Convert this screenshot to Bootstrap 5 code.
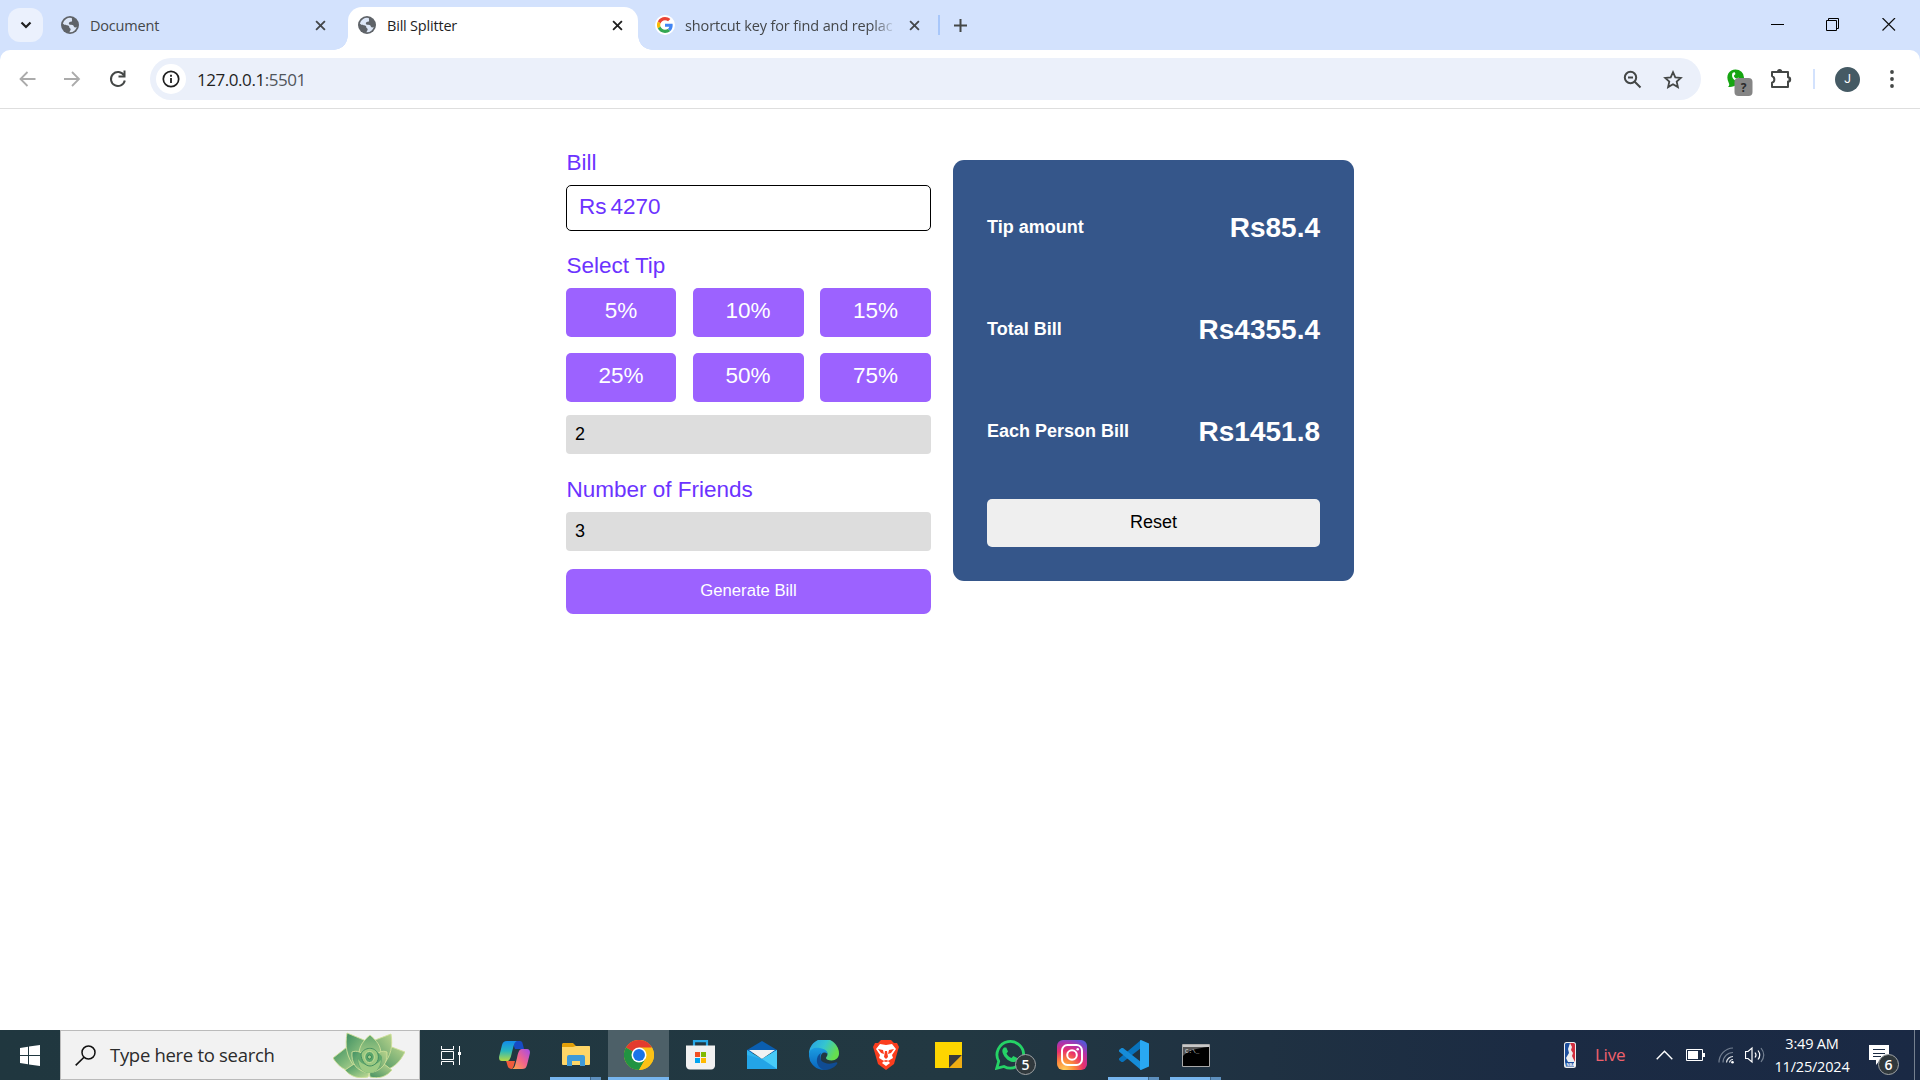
<!DOCTYPE html>
<html lang="en">
<head>
<meta charset="utf-8">
<meta name="viewport" content="width=device-width, initial-scale=1">
<title>Bill Splitter</title>
<link href="https://cdn.jsdelivr.net/npm/bootstrap@5.3.0/dist/css/bootstrap.min.css" rel="stylesheet">
<style>
  body { width: 1920px; height: 1080px; overflow: hidden; font-family: "Liberation Sans", sans-serif; background: #fff; }
  svg { display: block; flex: none; }
  .ui-font { font-family: "Open Sans", "Noto Sans", sans-serif; }

  /* Browser chrome */
  .tabstrip { height: 50px; background: #d3e2fd; padding-left: 8px; }
  .tab-search { width: 35px; height: 34px; margin-top: 8px; border-radius: 12px; background: #ebf1fd; }
  .tab-item { height: 36px; margin-top: 7px; font-size: 14.5px; color: #44474a; letter-spacing: -.2px; white-space: nowrap; }
  .tab-title { margin-left: 11px; margin-right: auto; padding-top: 1px; }
  .tab-first { width: 305px; padding: 0 22px 0 18px; }
  .tab-active { position: relative; width: 290px; height: 43px; padding: 0 15px 7px 10px; background: #fff; border-radius: 14px 14px 0 0; color: #1f1f1f; }
  .tab-active::before, .tab-active::after { content: ""; position: absolute; bottom: 0; width: 14px; height: 14px; }
  .tab-active::before { left: -14px; background: radial-gradient(circle at 0 0, transparent 13.5px, #fff 14px); }
  .tab-active::after { right: -14px; background: radial-gradient(circle at 100% 0, transparent 13.5px, #fff 14px); }
  .tab-third { width: 300px; padding: 0 18px 0 17px; }
  .g-disc { width: 20px; height: 20px; border-radius: 50%; background: #fff; }
  .fade-title { margin-left: 10px; letter-spacing: -.13px; -webkit-mask-image: linear-gradient(90deg, #000 90%, rgba(0,0,0,.15) 100%); mask-image: linear-gradient(90deg, #000 90%, rgba(0,0,0,.15) 100%); }
  .tab-rule { width: 2px; height: 20px; background: #a8c7fa; margin-top: 15px; }
  .new-tab { margin: 19px 0 0 14px; }
  .win-controls { padding: 18px 24px 0 0; gap: 42px; }
  .toolbar-wrap { height: 59px; background: #d3e2fd; }
  .toolbar { height: 59px; background: #fff; border-radius: 10px 10px 0 0; border-bottom: 1px solid #dedede; padding: 8px 18px 8px 18px; }
  .omnibox { width: 1551px; height: 42px; border-radius: 21px; background: #ebf0fa; padding: 0 18px 0 6px; margin-left: 22px; }
  .site-info { width: 30px; height: 30px; border-radius: 50%; background: #fff; }
  .address { font-size: 17px; letter-spacing: -.45px; color: #1f1f1f; margin-left: 11px; padding-top: 1px; }
  .address span { color: #50555b; }
  .avatar-j { width: 25px; height: 25px; border-radius: 50%; background: #455a64; color: #fff; font: 12px Roboto, sans-serif; }
  .bar-rule { width: 2px; height: 20px; background: #d3e2fd; }

  /* Page */
  .page { height: 921px; padding: 51px 0 0 566px; }
  .form-col { width: 365px; margin-right: 22px; margin-top: -11px; }
  .lbl { font-size: 22.5px; line-height: 26px; color: #6c33ff; margin: 0; padding-left: .5px; position: relative; top: .5px; }
  .bill-box { height: 46px; border: 1px solid #000; border-radius: 5px; padding: 0 12px 2px; font-size: 22.5px; color: #6c33ff; gap: 4px; margin-top: 10px; margin-bottom: 21px; }
  .tip-grid { display: grid; grid-template-columns: 110px 111px 111px; justify-content: space-between; row-gap: 16px; margin-top: 10px; }
  .tip-btn { height: 49px; border: 0; border-radius: 5px; padding: 0 0 2px; background: #9c62ff; color: #fff; font-size: 22.5px; line-height: 1; }
  .grey-input { height: 39px; border: 0; border-radius: 4px; background: #ddd; color: #000; font-size: 18px; padding: 0 9px 1px; }
  .gen-btn { height: 45px; border: 0; border-radius: 7px; background: #9c62ff; color: #fff; font-size: 16.67px; padding: 0 0 3px; margin-top: 18px; }
  .result { width: 401px; height: 421px; background: #35568a; border: 0; border-radius: 11px; padding: 16px 34px 34px; color: #fff; }
  .result-row { height: 102px; font-weight: 700; }
  .result-row h2 { font-size: 18px; font-weight: 700; margin: 0; padding-top: 2px; }
  .result-row strong { font-size: 28px; line-height: 1; padding-top: 1px; }
  .reset-btn { height: 48px; border: 0; border-radius: 5px; background: #efefef; color: #000; font-size: 18px; padding: 0 0 1px; margin-top: 17px; }

  /* Taskbar */
  .taskbar { height: 50px; background: linear-gradient(90deg, #20373f 0, #223842 50%, #1f3142 66%, #1b2b43 80%, #1a2944 100%); color: #fff; }
  .start { width: 60px; }
  .searchbox { width: 360px; background: #f2f2f2; border: 1px solid #bbb; color: #2b2b2b; font-size: 18.5px; padding: 0 14px 0 14px; letter-spacing: -.3px; }
  .task { position: relative; width: 62px; height: 50px; }
  .task-on { width: 61px; margin-left: 1px; background: #4d6068; border-bottom: 3px solid #76b5ee; padding-top: 3px; }
  .task-open::after { content: ""; position: absolute; bottom: 0; left: 5px; width: 51px; height: 3px; background: linear-gradient(90deg, #76b5ee 40px, #3f6688 40px, #3f6688 41px, #5d8fbd 41px); }
  .count { position: absolute; width: 21px; height: 21px; border-radius: 50%; background: #30383c; border: 1px solid #a0a4a6; font-size: 14px; font-weight: 600; line-height: 19px; text-align: center; color: #fff; }
  .count-wa { left: 36px; top: 24px; }
  .count-note { left: 9px; top: 9px; }
  .tray { width: 356px; }
  .live { color: #f0616d; font-size: 17px; letter-spacing: -.25px; width: 61px; margin-left: 19px; }
  .clock { width: 84px; font-size: 14.5px; line-height: 23px; letter-spacing: -.2px; white-space: nowrap; }
  .show-desk { width: 6px; border-left: 1px solid #75808f; }
</style>
<script src="https://cdn.jsdelivr.net/npm/bootstrap@5.3.0/dist/js/bootstrap.bundle.min.js"></script>
</head>
<body class="d-flex flex-column">

<svg width="0" height="0" class="position-absolute" aria-hidden="true">
  <symbol id="globe" viewBox="0 0 24 24"><circle cx="12" cy="12" r="12" fill="#5f6368"/><path fill="#dde7f7" d="M14.2 2.6A9.7 9.7 0 0 0 2.5 10c2.300 2.300 3.600 2 5.500 2.200 2.300.2 3.200 1.600 3.200 3.400 0 .9 1.700.5 1.700 2 0 1.700-1.200 2.500-1.700 4.100a9.800 9.800 0 0 0 9.900-7.300c-1.500 1.600-3.300 1.200-4-.3-.6-1.300-.3-2.100-1.900-2.200-2.300-.1-4.800.3-4.800-2.100 0-1.500 1.300-2.300 3-2.300 1.300 0 1.500-.8 1.300-1.900-.2-1.200.2-2.300-.5-3z"/></symbol>
  <symbol id="cross" viewBox="0 0 12 12"><path d="M1.200 1.200 10.800 10.800M10.800 1.200 1.200 10.800" fill="none" stroke="currentColor" stroke-width="2"/></symbol>
</svg>

<header class="ui-font">
  <div class="tabstrip d-flex">
    <div class="tab-search d-flex align-items-center justify-content-center"><svg width="12" height="8" viewBox="0 0 12 8"><path d="m1.500 1.500 4.500 4.500 4.500-4.500" fill="none" stroke="#1f1f1f" stroke-width="2.200"/></svg></div>
    <div class="tab-item tab-first d-flex align-items-center"><svg width="18" height="18"><use href="#globe"/></svg><span class="tab-title">Document</span><svg width="11" height="11"><use href="#cross"/></svg></div>
    <div class="tab-item tab-active d-flex align-items-center"><svg width="18" height="18"><use href="#globe"/></svg><span class="tab-title">Bill Splitter</span><svg width="11" height="11"><use href="#cross"/></svg></div>
    <div class="tab-item tab-third d-flex align-items-center"><span class="g-disc d-flex align-items-center justify-content-center"><svg width="16" height="16" viewBox="0 0 48 48"><path fill="#ea4335" d="M24 9.500c3.500 0 6.700 1.200 9.200 3.600l6.900-6.900C35.900 2.400 30.500 0 24 0 14.600 0 6.500 5.400 2.600 13.200l8 6.200C12.400 13.700 17.700 9.500 24 9.500z"/><path fill="#4285f4" d="M47 24.500c0-1.600-.2-3.100-.4-4.500H24v9h12.900c-.6 3-2.200 5.500-4.700 7.200l7.700 6C44.400 38 47 31.800 47 24.500z"/><path fill="#fbbc05" d="M10.500 28.600a14.500 14.500 0 0 1 0-9.200l-8-6.200a24 24 0 0 0 0 21.600z"/><path fill="#34a853" d="M24 48c6.500 0 11.900-2.100 15.900-5.800l-7.700-6c-2.200 1.500-4.900 2.300-8.200 2.300-6.300 0-11.600-4.200-13.500-9.900l-8 6.200C6.500 42.600 14.600 48 24 48z"/></svg></span><span class="tab-title fade-title">shortcut key for find and replac</span><svg width="11" height="11"><use href="#cross"/></svg></div>
    <span class="tab-rule"></span>
    <svg class="new-tab" width="13" height="13" viewBox="0 0 13 13"><path d="M6.500 0v13M0 6.500h13" stroke="#444746" stroke-width="2"/></svg>
    <div class="win-controls d-flex ms-auto">
      <svg width="13" height="13"><path d="M0 6.500h13" stroke="#000"/></svg>
      <svg width="14" height="13"><path d="M.5 2.500h10v10H.5zM2.500 2.500v-2h10v10h-2" fill="none" stroke="#000"/></svg>
      <svg width="14" height="13"><path d="M.5 0 13 12.500M13 0 .5 12.500" stroke="#111" stroke-width="1.200"/></svg>
    </div>
  </div>
  <div class="toolbar-wrap">
    <div class="toolbar d-flex align-items-center">
      <svg width="18" height="18" viewBox="0 0 18 18"><path d="M17.500 9H3M9.500 2 2.500 9l7 7" fill="none" stroke="#ababab" stroke-width="1.800"/></svg>
      <svg style="margin-left:27px" width="18" height="18" viewBox="0 0 18 18"><path d="M1 9h14.500M9 2l7 7-7 7" fill="none" stroke="#ababab" stroke-width="1.800"/></svg>
      <svg style="margin-left:27px" width="20" height="20" viewBox="0 0 20 20"><path d="M16 6.500a7 7 0 1 0 .8 5" fill="none" stroke="#444746" stroke-width="2"/><path d="M17.500 1.500v7h-7v-2h5v-5z" fill="#444746"/></svg>
      <div class="omnibox d-flex align-items-center">
        <span class="site-info d-flex align-items-center justify-content-center"><svg width="18" height="18" viewBox="0 0 18 18"><circle cx="9" cy="9" r="7.700" fill="none" stroke="#1f1f1f" stroke-width="1.700"/><path d="M9 8v5M9 4.800v2" stroke="#1f1f1f" stroke-width="1.800"/></svg></span>
        <div class="address me-auto">127.0.0.1<span>:5501</span></div>
        <svg width="19" height="19" viewBox="0 0 19 19"><circle cx="7.500" cy="7.500" r="5.700" fill="none" stroke="#444746" stroke-width="2"/><path d="m11.500 11.500 6 6M5 7.500h5" stroke="#444746" stroke-width="2"/></svg>
        <svg style="margin-left:21px" width="20" height="19" viewBox="0 0 20 19"><path d="m10 2.200 2.300 5.100 5.500.6-4.100 3.700 1.200 5.500-4.900-2.900-4.900 2.900 1.200-5.500L2.200 7.900l5.500-.6z" fill="none" stroke="#444746" stroke-width="1.800"/></svg>
      </div>
      <svg style="margin-left:24px" width="28" height="34" viewBox="0 0 28 34"><path d="M10.500 7.500a8.500 8 0 0 1 8.500 8c0 4.500-4 8-8.500 8-2.500 1.500-5 1.500-7.500 1.500 1.500-1.500 1.500-2.500.8-4C0 13 4.500 7.500 10.500 7.500z" fill="#16a512"/><path d="M7.500 11c-2 5 3 9.500 7 7.500l-1-3-2 1c-2-.5-3-2.500-2.500-3l1.500-1.500-1-2z" fill="#fff"/><rect x="9.500" y="16" width="18" height="18" rx="4" fill="#858585"/><text x="18.500" y="29.500" text-anchor="middle" font-family="Open Sans" font-weight="700" font-size="12" fill="#2b2b2b">?</text></svg>
      <svg style="margin-left:17px" width="22" height="22" viewBox="0 0 22 22"><path d="M2 4h16v5.200a2 2 0 0 1 0 4.400V19H2v-4.300a3.500 3.500 0 0 0 0-6.600z" fill="none" stroke="#444746" stroke-width="2" stroke-linejoin="round"/><path d="M7 3.500a2.600 2.600 0 0 1 5.200 0zM18.500 9a2.600 2.600 0 0 1 0 5z" fill="#444746"/></svg>
      <span class="bar-rule" style="margin-left:21px"></span>
      <span class="avatar-j d-flex align-items-center justify-content-center" style="margin-left:20px">J</span>
      <svg style="margin-left:30px" width="4" height="20"><circle cx="2" cy="3" r="1.900" fill="#444746"/><circle cx="2" cy="10" r="1.900" fill="#444746"/><circle cx="2" cy="17" r="1.900" fill="#444746"/></svg>
    </div>
  </div>
</header>

<main class="page d-flex align-items-start">
  <section class="form-col">
    <p class="lbl">Bill</p>
    <div class="bill-box d-flex align-items-center"><span>Rs</span><span>4270</span></div>
    <p class="lbl">Select Tip</p>
    <div class="tip-grid">
      <button class="btn tip-btn">5%</button>
      <button class="btn tip-btn">10%</button>
      <button class="btn tip-btn">15%</button>
      <button class="btn tip-btn">25%</button>
      <button class="btn tip-btn">50%</button>
      <button class="btn tip-btn">75%</button>
    </div>
    <div class="grey-input d-flex align-items-center" style="margin-top:13px">2</div>
    <p class="lbl" style="margin-top:22px">Number of Friends</p>
    <div class="grey-input d-flex align-items-center" style="margin-top:10px">3</div>
    <button class="btn gen-btn w-100">Generate Bill</button>
  </section>
  <section class="card result">
    <div class="result-row d-flex align-items-center justify-content-between"><h2>Tip amount</h2><strong>Rs85.4</strong></div>
    <div class="result-row d-flex align-items-center justify-content-between"><h2>Total Bill</h2><strong>Rs4355.4</strong></div>
    <div class="result-row d-flex align-items-center justify-content-between"><h2>Each Person Bill</h2><strong>Rs1451.8</strong></div>
    <button class="btn reset-btn w-100">Reset</button>
  </section>
</main>

<footer class="taskbar ui-font d-flex">
  <div class="start d-flex align-items-center justify-content-center"><svg width="20" height="21" viewBox="0 0 20 21"><path fill="#fff" d="M0 3 8 1.800V10H0zM9 1.600 20 0v10H9zM0 11h8v8.200L0 18zM9 11h11v10L9 19.400z"/></svg></div>
  <div class="searchbox d-flex align-items-center">
    <svg width="21" height="21" viewBox="0 0 21 21"><circle cx="13.500" cy="7.500" r="6.500" fill="none" stroke="#111" stroke-width="1.500"/><path d="M9 12.200.7 20.400" stroke="#111" stroke-width="1.600"/></svg>
    <span class="me-auto" style="margin-left:14px">Type here to search</span>
    <svg width="72" height="46" viewBox="0 0 72 46">
      <defs><linearGradient id="leaf" x1="0" y1="0" x2="1" y2="1"><stop offset="0" stop-color="#3f8f62"/><stop offset=".5" stop-color="#7fb87a"/><stop offset="1" stop-color="#c6dc97"/></linearGradient><linearGradient id="leaf2" x1="1" y1="0" x2="0" y2="1"><stop offset="0" stop-color="#b9d48c"/><stop offset="1" stop-color="#438f62"/></linearGradient><linearGradient id="leaf3" x1="0" y1="0" x2="0" y2="1"><stop offset="0" stop-color="#63a76f"/><stop offset="1" stop-color="#b8d68d"/></linearGradient></defs>
      <g stroke="#cfe09a" stroke-width=".9">
        <path d="M0 26 14 15l14 10-4 15C12 40 5 34 0 26z" fill="url(#leaf)"/>
        <path d="M72 20 56 14 43 25l6 14c11-2 18-9 23-19z" fill="url(#leaf2)"/>
        <path d="M14 1 31 8l8 15-17 12C13 25 12 13 14 1z" fill="url(#leaf)"/>
        <path d="M58 2 42 8l-7 15 15 10c8-9 10-19 8-31z" fill="url(#leaf2)"/>
        <path d="M37 3c7 6 11 11 11 19l-11 8-11-8c0-8 5-14 11-19z" fill="url(#leaf3)"/>
        <path d="M12 38l9-6 16 6-2 7c-9 2-17 0-23-7z" fill="url(#leaf)"/>
        <path d="M59 38l-8-6-15 6 1 7c9 2 16 0 22-7z" fill="url(#leaf2)"/>
        <path d="M19 20c5-2 10 0 14 6l3 15c-13-2-18-10-17-21z" fill="url(#leaf)"/>
        <path d="M54 20c-5-2-9 0-13 6l-5 15c13-2 19-10 18-21z" fill="url(#leaf2)"/>
      </g>
      <path d="M24 25c4-8 21-8 25 0 0 10-6 16-13 16s-12-7-12-16z" fill="#62a86e"/>
      <path d="M25 27c5 8 16 9 23 1-1 9-6 13-12 13s-10-5-11-14z" fill="#9dcb84"/>
      <path d="M28 22c3-7 14-8 17 0 2 8-4 12-8 12-5 0-9-6-9-12z" fill="#9cc981" stroke="#438f62"/>
      <ellipse cx="36.500" cy="25" rx="4.800" ry="5.500" fill="#5aa56b" stroke="#c9df98"/>
      <circle cx="36.500" cy="25" r="2" fill="#a7d08a" stroke="#2f7f50" stroke-width=".8"/>
    </svg>
  </div>
  <div class="d-flex">
    <div class="task d-flex align-items-center justify-content-center"><svg width="20" height="19" viewBox="0 0 20 19"><path d="M.5 0v3.500h12V0M.5 5.500h12v8H.5zM.5 19v-3.500h12V19M18.500 0v19" fill="none" stroke="#fff"/><path d="M17 6h3v3h-3z" fill="#fff"/></svg></div>
    <div class="task d-flex align-items-center justify-content-center" style="margin-left:1px"><svg width="31" height="28" viewBox="0 0 31 28"><defs><linearGradient id="cp1" x1="0" y1="0" x2="0" y2="1"><stop offset="0" stop-color="#128bea"/><stop offset=".5" stop-color="#28b7bd"/><stop offset="1" stop-color="#b6d942"/></linearGradient><linearGradient id="cp2" x1="1" y1="0" x2="0" y2="1"><stop offset="0" stop-color="#a34cea"/><stop offset=".5" stop-color="#f0638d"/><stop offset="1" stop-color="#ffab45"/></linearGradient></defs><path d="M13 0h8c2 0 2.500 2 3 4l1 4h-9z" fill="#174bc4"/><path d="M8 0h10c-3 1-3 4-5 11-1 5-2 9-5 9H3c-3 0-3.500-3-2.500-6L3 4c1-3 2-4 5-4z" fill="url(#cp1)"/><path d="M23 28H13c3-1 3-4 5-11 1-5 2-9 5-9h5c3 0 3.500 3 2.500 6L28 24c-1 3-2 4-5 4z" fill="url(#cp2)"/><path d="M7 20h9c-1 3-1 6-3 8-5 0-4-4-6-8z" fill="#f05b3c"/></svg></div>
    <div class="task task-open d-flex align-items-center justify-content-center"><svg width="28" height="24" viewBox="0 0 28 24"><path d="M0 1.500C0 .7.700 0 1.500 0H11l3 3h12.500c.8 0 1.500.7 1.500 1.500V10H0z" fill="#e3a008"/><path d="M0 4h11l3-1h13a1 1 0 0 1 1 1v17a1 1 0 0 1-1 1H1a1 1 0 0 1-1-1z" fill="#ffd667"/><path d="M5 23v-9a2 2 0 0 1 2-2h14a2 2 0 0 1 2 2v9h-5v-5h-8v5z" fill="#3e9ad9"/></svg></div>
    <div class="task task-on d-flex align-items-center justify-content-center"><svg width="30" height="30" viewBox="0 0 48 48"><circle cx="24" cy="24" r="24" fill="#fbc116"/><path d="M24 24 3.200 12A24 24 0 0 1 44.800 12z" fill="#e33b2e"/><path d="M3.200 12A24 24 0 0 0 24 48l10.400-18L24 24z" fill="#229342"/><path d="M24 12h20.800A24 24 0 0 1 24 48l10.400-18z" fill="#fbc116"/><circle cx="24" cy="24" r="12" fill="#fff"/><circle cx="24" cy="24" r="9.500" fill="#1a73e8"/></svg></div>
    <div class="task d-flex align-items-center justify-content-center"><svg width="29" height="30" viewBox="0 0 29 30"><path d="M8 7V1.200h13V7" fill="none" stroke="#29a9e8" stroke-width="2.200"/><path d="M0 5.500h29V25a4 4 0 0 1-4 4.500H4A4 4 0 0 1 0 25z" fill="#f1f1f1"/><path d="M9 12h5v5H9z" fill="#f25022"/><path d="M15 12h5v5h-5z" fill="#7fba00"/><path d="M9 18h5v5H9z" fill="#00a4ef"/><path d="M15 18h5v5h-5z" fill="#ffb900"/></svg></div>
    <div class="task d-flex align-items-center justify-content-center"><svg width="30" height="28" viewBox="0 0 30 28"><path d="M0 9 15 0l15 9v3H0z" fill="#0a5eb0"/><path d="M0 9v19h30V9L15 18z" fill="#2eb4ee"/><path d="M2 9h26L15 18z" fill="#f3f3f3"/><path d="M30 9v19L15 18z" fill="#48cbf7"/><path d="M0 28V14l15 4 15 10z" fill="#1f9de4" opacity=".7"/></svg></div>
    <div class="task d-flex align-items-center justify-content-center"><svg width="30" height="30" viewBox="0 0 30 30"><defs><linearGradient id="ed1" x1="0" y1="0" x2="1" y2=".4"><stop offset="0" stop-color="#269de9"/><stop offset=".55" stop-color="#35c5d0"/><stop offset="1" stop-color="#66df4e"/></linearGradient><linearGradient id="ed2" x1="0" y1="0" x2="0" y2="1"><stop offset="0" stop-color="#1b9de2"/><stop offset="1" stop-color="#0964bd"/></linearGradient></defs><path d="M0 14A15 15 0 0 1 30 13.500c0 4-3 7-7.500 7-3 0-5.500-1-5.500-2.500 0-1 1.500-1.500 1.500-4 0-4-8-7-18.500 0z" fill="url(#ed1)"/><path d="M0 14C.5 8 7 7 11 8c5 1 7.500 3 7.500 6-3-3-7-1-7 4 0 6 5 9 10 9-3 2-6 3-9 2.800A15 15 0 0 1 0 14z" fill="url(#ed2)"/><path d="M12 13c-4 8 5 13 14.500 9.500C28 22 29 23 28 24c-3 4-8 6-13 6C6 27 6 16 12 13z" fill="#104c93"/></svg></div>
    <div class="task d-flex align-items-center justify-content-center"><svg width="26" height="30" viewBox="0 0 26 30"><path d="m8 0h10l3 3h3l2 4-1 3-4 14-8 6-8-6L1 10 0 7l2-4h3z" fill="#fb3d1e"/><path d="m7 4 6 1 6-1 4 5-4 6 1 3-5 3 2 2-4 3-4-3 2-2-5-3 1-3-4-6z" fill="#fff"/><path d="m5 9 5 1 1 4-3-1zM21 9l-5 1-1 4 3-1zM12 11h2l1 6-2 2-2-2zM10 21l3-1 3 1-3 1z" fill="#fb3d1e"/></svg></div>
    <div class="task d-flex align-items-center justify-content-center"><svg width="27" height="26" viewBox="0 0 27 26"><path d="M0 0h27v13L14 26H0z" fill="#fed500"/><path d="M14 13h13L14 26z" fill="#39393b"/><path d="M27 13v13H14z" fill="#f0ad13"/></svg></div>
    <div class="task d-flex align-items-center justify-content-center"><svg width="30" height="30" viewBox="0 0 30 30"><path d="m1.700 28.300 2-7A13.300 13.300 0 1 1 9 26.500z" fill="none" stroke="#25d366" stroke-width="2.800"/><path d="M9 7.500h2.300l1.700 4-1.500 2c1 2.200 2.800 3.600 5 4.500l1.800-2 3.900 1.900c0 3-2 4.200-4.200 4.200C13 21.800 7.500 15.500 7.300 11c0-1.500.8-2.700 1.700-3.500z" fill="#25d366"/></svg><span class="count count-wa">5</span></div>
    <div class="task d-flex align-items-center justify-content-center"><svg width="30" height="30" viewBox="0 0 30 30"><defs><radialGradient id="ig" cx=".25" cy="1" r="1.100"><stop offset="0" stop-color="#ffd05c"/><stop offset=".3" stop-color="#fb8a3b"/><stop offset=".58" stop-color="#e9306b"/><stop offset=".8" stop-color="#b432a8"/><stop offset="1" stop-color="#5b55d5"/></radialGradient></defs><rect width="30" height="30" rx="6" fill="url(#ig)"/><rect x="5" y="5" width="20" height="20" rx="5.500" fill="none" stroke="#fff" stroke-width="2"/><circle cx="15" cy="15" r="4.800" fill="none" stroke="#fff" stroke-width="2"/><circle cx="20.700" cy="9.300" r="1.300" fill="#fff"/></svg></div>
    <div class="task task-open d-flex align-items-center justify-content-center"><svg width="30" height="30" viewBox="0 0 30 30"><path d="M22 0v8L4 22l-1.500.1L0 20v-1.500z" fill="#0873bd"/><path d="M22 30v-8L4 8l-1.500-.1L0 10v1.500z" fill="#168cd8"/><path d="M22 0 30 3.500v23L22 30c-.7 0-1-.3-1-.8V.8c0-.5.3-.8 1-.8z" fill="#29a8f3"/></svg></div>
    <div class="task task-open d-flex align-items-center justify-content-center"><svg width="28" height="23" viewBox="0 0 28 23"><path d="M.5.500h27v22H.5z" fill="#000" stroke="#aaa"/><path d="M1 1h26v2H1z" fill="#c8c8c8"/><path d="M1 3h25C15 4 5 7 1 12z" fill="#555"/><text x="3" y="8.500" fill="#ddd" font-family="Liberation Mono" font-size="6">C:\_</text></svg></div>
  </div>
  <div class="tray d-flex align-items-center ms-auto">
    <svg width="12" height="26" viewBox="0 0 12 26"><rect width="12" height="26" rx="2.500" fill="#eee"/><path d="M1 2.500Q1 1 2.500 1H6L4 7l1 4-3 5 2 4H1z" fill="#1b4d9c"/><path d="M6 1h3.500Q11 1 11 2.500V20L8 14l1-3-2-3 1-3z" fill="#d12e3d"/><path d="M1 20h9v4.500H2z" fill="#1b4d9c"/><text x="2.500" y="23.700" font-family="Liberation Sans" font-size="4" font-weight="700" fill="#fff">NBA</text></svg>
    <span class="live">Live</span>
    <svg width="17" height="10" viewBox="0 0 17 10"><path d="m.7 9.200 7.800-8 7.800 8" fill="none" stroke="#fff" stroke-width="1.400"/></svg>
    <svg style="margin-left:13px" width="19" height="12"><path d="M.5.500h16v11H.5z" fill="none" stroke="#fff"/><path d="M2 2h10v8H2zM17 4h2v4h-2z" fill="#fff"/></svg>
    <svg style="margin-left:13px" width="16" height="17" viewBox="0 0 16 17"><path d="M1 15.500A14.500 14.500 0 0 1 15 1M5 15.500A10 10 0 0 1 15 5.500" fill="none" stroke="#748092" stroke-width="1.200"/><path d="M8.500 15.500A6.500 6.500 0 0 1 15 9.500M11.500 15.500A3.500 3.500 0 0 1 15 12.500" fill="none" stroke="#dfe3e8" stroke-width="1.200"/><circle cx="14.500" cy="15.300" r="1.300" fill="#fff"/></svg>
    <svg style="margin-left:11px" width="21" height="18" viewBox="0 0 21 18"><path d="M.5 5.500H3L7 2v14l-4-3.500H.5z" fill="none" stroke="#fff" stroke-width="1.200"/><path d="M10 6.500q2 2.500 0 5M13 4.500q3.500 4.500 0 9" fill="none" stroke="#fff" stroke-width="1.200"/><path d="M16 2q5.500 7 0 14" fill="none" stroke="#748092" stroke-width="1.200"/></svg>
    <div class="clock text-center" style="margin-left:4px">3:49 AM<br>11/25/2024</div>
    <div class="position-relative" style="margin-left:15px"><svg width="21" height="21" viewBox="0 0 21 21"><path d="M0 0h20v15h-9l-4 5v-5H0z" fill="#fff"/><path d="M4 4.500h12M4 8.500h12M4 11.500h8" stroke="#1b2b43"/></svg><span class="count count-note">6</span></div>
    <span class="show-desk ms-auto h-100"></span>
  </div>
</footer>
</body>
</html>
